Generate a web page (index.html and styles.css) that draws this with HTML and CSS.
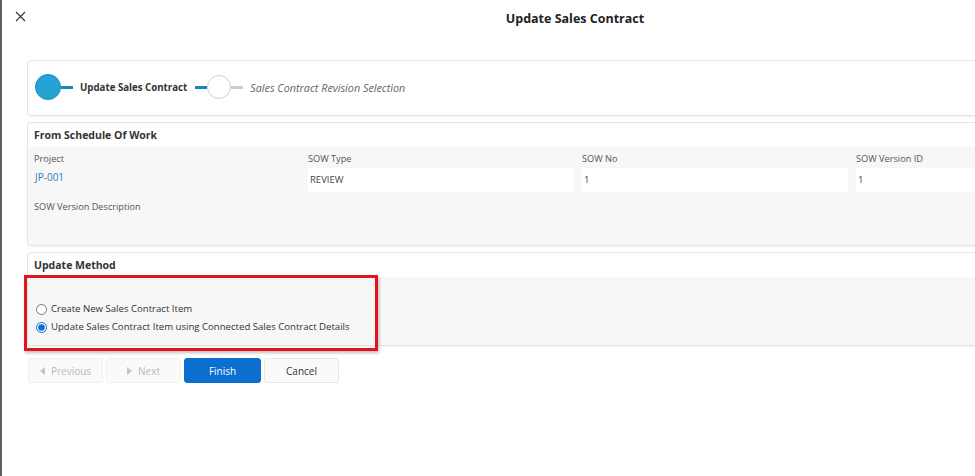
FILE: index.html
```html
<!DOCTYPE html>
<html lang="en">
<head>
    <meta charset="UTF-8">
    <title>Update Sales Contract</title>
    <link rel="stylesheet" href="styles.css">
</head>
<body>
    <div class="dialog">
        <div class="dialog-header">
            <button class="close-button" aria-label="Close">
                <svg width="11" height="11" viewBox="0 0 11 11"><path d="M1 1L10 10M10 1L1 10" stroke="#333" stroke-width="1.1" fill="none"/></svg>
            </button>
            <div class="dialog-title">Update Sales Contract</div>
        </div>

        <div class="panel stepper">
            <div class="step-dot done"></div>
            <div class="step-line blue short"></div>
            <div class="step-label active">Update Sales Contract</div>
            <div class="step-line blue"></div>
            <div class="step-dot"></div>
            <div class="step-line grey"></div>
            <div class="step-label pending">Sales Contract Revision Selection</div>
        </div>

        <div class="panel">
            <div class="panel-header">From Schedule Of Work</div>
            <div class="panel-body fields">
                <div class="field">
                    <div class="field-label">Project</div>
                    <a class="field-link" href="#">JP-001</a>
                </div>
                <div class="field">
                    <div class="field-label">SOW Type</div>
                    <div class="field-value">REVIEW</div>
                </div>
                <div class="field">
                    <div class="field-label">SOW No</div>
                    <div class="field-value">1</div>
                </div>
                <div class="field">
                    <div class="field-label">SOW Version ID</div>
                    <div class="field-value">1</div>
                </div>
                <div class="field wide">
                    <div class="field-label">SOW Version Description</div>
                </div>
            </div>
        </div>

        <div class="panel method">
            <div class="panel-header">Update Method</div>
            <div class="panel-body options">
                <label class="option"><input type="radio" name="method"> Create New Sales Contract Item</label>
                <label class="option"><input type="radio" name="method" checked> Update Sales Contract Item using Connected Sales Contract Details</label>
            </div>
            <div class="highlight"></div>
        </div>

        <div class="actions">
            <button class="btn disabled">
                <svg width="5" height="8" viewBox="0 0 5 8"><path d="M5 0L0 4L5 8Z" fill="#c4c4c4"/></svg>
                Previous
            </button>
            <button class="btn disabled">
                <svg width="5" height="8" viewBox="0 0 5 8"><path d="M0 0L5 4L0 8Z" fill="#c4c4c4"/></svg>
                Next
            </button>
            <button class="btn primary">Finish</button>
            <button class="btn">Cancel</button>
        </div>
    </div>
</body>
</html>
```

FILE: styles.css
```css
* {
    box-sizing: border-box;
}

html, body {
    margin: 0;
    height: 100%;
}

body {
    overflow: hidden;
    background: #ffffff;
    border-left: 2px solid #5e5e5e;
    font-family: 'Open Sans', 'Noto Sans', sans-serif;
    color: #333333;
}

.dialog {
    width: 1150px;
    padding: 0 25px;
}

.dialog-header {
    position: relative;
    height: 36px;
    display: flex;
    align-items: center;
    justify-content: center;
    margin-bottom: 24px;
}

.close-button {
    position: absolute;
    left: -12px;
    top: 11px;
    padding: 0;
    border: none;
    background: none;
    line-height: 0;
    cursor: pointer;
}

.dialog-title {
    font-size: 12.5px;
    font-weight: 700;
    color: #222222;
    margin-left: -4px;
}

.panel {
    position: relative;
    background: #ffffff;
    border: 1px solid #e4e4e4;
    border-radius: 4px;
    box-shadow: 0 1px 2px rgba(0, 0, 0, 0.06);
    margin-bottom: 6px;
}

.stepper {
    height: 56px;
    display: flex;
    align-items: center;
    padding: 0 0 2px 7px;
}

.step-dot {
    width: 24px;
    height: 24px;
    border-radius: 50%;
    border: 1.5px solid #cfcfcf;
    background: #ffffff;
    flex-shrink: 0;
}

.step-dot.done {
    width: 26px;
    height: 26px;
    background: #27a2d6;
    border-color: #1c87b8;
}

.step-line {
    height: 3px;
    width: 12px;
    flex-shrink: 0;
}

.step-line.blue {
    background: #1a86c0;
}

.step-line.short {
    width: 12px;
}

.step-line.grey {
    background: #cccccc;
}

.step-label {
    white-space: nowrap;
}

.step-label.active {
    font-size: 9.7px;
    font-weight: 700;
    color: #333333;
    margin: 0 8px 0 7px;
}

.step-label.pending {
    font-size: 10.8px;
    font-style: italic;
    color: #666666;
    margin-left: 7px;
}

.panel-header {
    height: 24px;
    display: flex;
    align-items: center;
    padding-left: 6px;
    font-size: 10.5px;
    font-weight: 700;
    color: #333333;
}

.panel-body {
    background: #f7f7f7;
    border-radius: 0 0 4px 4px;
}

.fields {
    display: grid;
    grid-template-columns: repeat(4, 266px);
    align-content: start;
    column-gap: 8px;
    padding: 5px 6px 0;
    height: 98px;
}

.field {
    display: flex;
    flex-direction: column;
}

.field.wide {
    grid-column: 1 / -1;
    margin-top: 8px;
}

.field-label {
    font-size: 9.2px;
    color: #555555;
    line-height: 14px;
}

.field-value {
    margin-top: 2px;
    height: 24px;
    background: #ffffff;
    font-size: 9.5px;
    color: #444444;
    padding: 5px 2px 0;
}

.field-link {
    margin-top: 4px;
    font-size: 10px;
    color: #2a7ec0;
    text-decoration: none;
    padding-left: 1px;
}

.options {
    height: 68px;
    padding: 24px 0 0 8px;
    display: flex;
    flex-direction: column;
    gap: 2px;
}

.option {
    display: flex;
    align-items: center;
    font-size: 9.6px;
    color: #333333;
    line-height: 16px;
}

.option input {
    width: 11px;
    height: 11px;
    margin: 0 4px 0 0;
    accent-color: #0a6fd6;
}

.highlight {
    position: absolute;
    left: -4px;
    top: 22px;
    width: 354px;
    height: 76px;
    border: 3px solid #e0141d;
    box-shadow: 1px 2px 3px rgba(0, 0, 0, 0.25);
    pointer-events: none;
}

.actions {
    display: flex;
    gap: 3px;
    margin-top: 12px;
    padding-left: 1px;
}

.btn {
    width: 75px;
    height: 25px;
    display: flex;
    align-items: center;
    justify-content: center;
    gap: 6px;
    border: 1px solid #e6e6e6;
    border-radius: 3px;
    background: #fafafa;
    font-family: inherit;
    font-size: 10px;
    color: #333333;
    cursor: pointer;
}

.btn.disabled {
    color: #b8b8b8;
    border-color: #f0f0f0;
    cursor: default;
}

.btn.primary {
    width: 77px;
    background: #0b6fd0;
    border-color: #0b6fd0;
    color: #ffffff;
}
```
